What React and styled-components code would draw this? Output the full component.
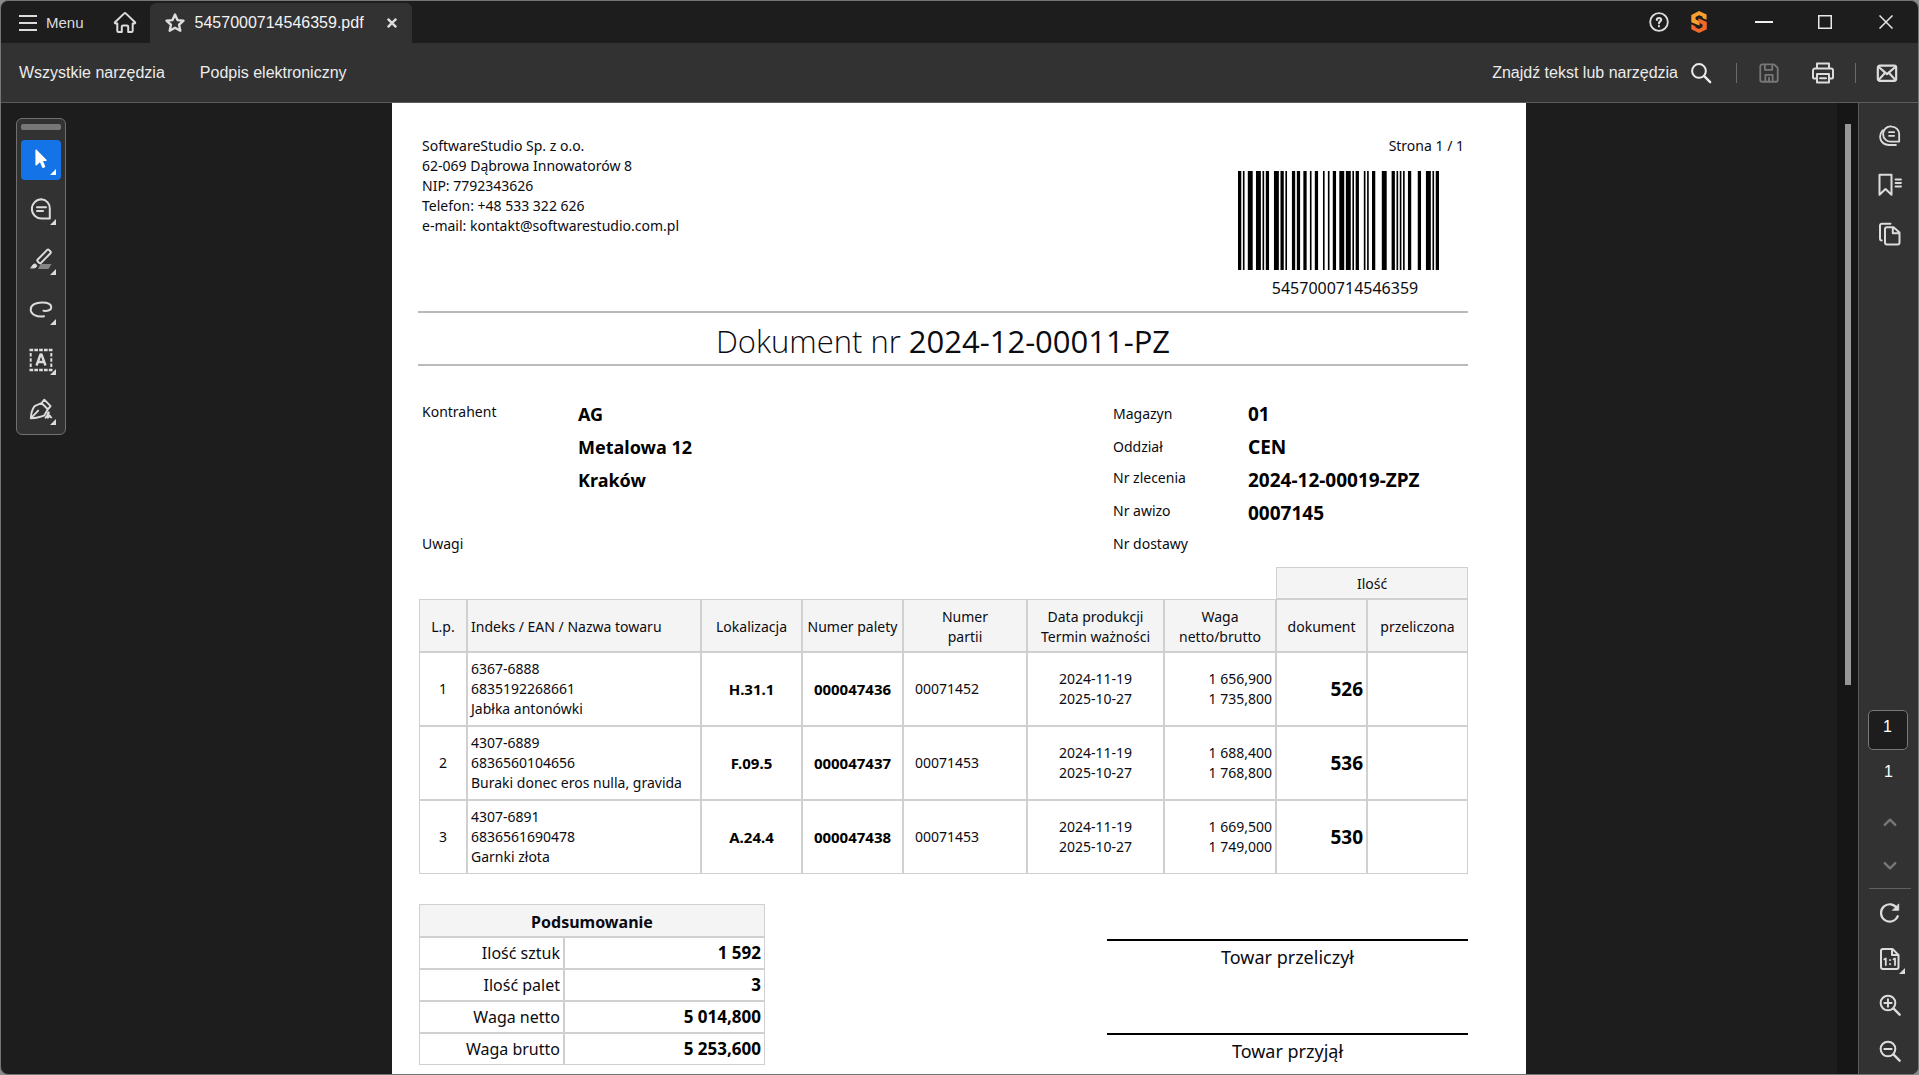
import React from "react";
import styled, { createGlobalStyle, css } from "styled-components";

const chrome = "#1d1d1d";
const panel = "#323232";
const edge = "#5c5c5c";
const ink = "#dcdcdc";
const rule = "#d0d0d0";
const uiFont = '"Liberation Sans", Arial, sans-serif';
const docFont = '"Noto Sans", "Open Sans", sans-serif';
const titleFont = '"Open Sans", "Noto Sans", sans-serif';

const GlobalStyle = createGlobalStyle`
  * { box-sizing: border-box; }
  body { margin: 0; background: #8c8c8c; }
  button, input { font: inherit; color: inherit; }
`;

/* ---------- window chrome ---------- */

const Window = styled.div`
  display: flex;
  flex-direction: column;
  height: 100vh;
  border: 1px solid #757575;
  border-radius: 8px;
  overflow: hidden;
  background: ${chrome};
  color: ${ink};
  font: 16px/20px ${uiFont};
`;

const TitleBar = styled.header`
  display: flex;
  align-items: stretch;
  justify-content: space-between;
  flex: none;
  height: 42px;
`;

const TitleGroup = styled.div`
  display: flex;
  align-items: stretch;
`;

const PlainButton = styled.button`
  display: flex;
  align-items: center;
  justify-content: center;
  padding: 0;
  border: 0;
  background: none;
  flex: none;
  svg { display: block; }
`;

const MenuButton = styled(PlainButton)`
  gap: 9px;
  padding: 2px 0 0 18px;
  font-size: 15px;
`;

const HomeButton = styled(PlainButton)`
  width: 66px;
  padding: 2px 0 0 16px;
`;

const Tab = styled.div`
  display: flex;
  align-items: center;
  width: 262px;
  margin-top: 2px;
  padding-left: 14px;
  border-radius: 6px 6px 0 0;
  background: ${panel};
  color: #f4f4f4;
`;

const TabName = styled.span`
  flex: 1;
  padding-left: 9px;
`;

const TabClose = styled(PlainButton)`
  width: 40px;
  height: 40px;
  color: ${ink};
`;

const TabStar = styled(PlainButton)`
  color: ${ink};
`;

const CaptionButton = styled(PlainButton)`
  width: ${(p) => p.$w}px;
  margin-right: ${(p) => p.$after || 0}px;
`;

const Toolbar = styled.nav`
  display: flex;
  align-items: center;
  justify-content: space-between;
  flex: none;
  height: 60px;
  padding-left: 18px;
  border-bottom: 1px solid ${edge};
  background: ${panel};
  color: #ececec;
`;

const ToolbarLinks = styled.div`
  display: flex;
  gap: 35px;
`;

const TextButton = styled(PlainButton)`
  gap: 12px;
`;

const ToolbarActions = styled.div`
  display: flex;
  align-items: center;
`;

const IconButton = styled(PlainButton)`
  width: ${(p) => p.$w || 40}px;
  height: 40px;
  color: ${(p) => (p.disabled ? "#777" : ink)};
`;

const Separator = styled.span`
  width: 1px;
  height: 20px;
  margin-left: ${(p) => p.$before}px;
  background: #6a6a6a;
`;

/* ---------- work area ---------- */

const Workspace = styled.div`
  display: flex;
  flex: 1;
  min-height: 0;
`;

const ToolRail = styled.aside`
  flex: none;
  width: 80px;
  padding: 15px;
`;

const ToolPalette = styled.div`
  display: flex;
  flex-direction: column;
  align-items: center;
  gap: 10px;
  width: 50px;
  padding: 5px 4px 4px;
  border: 1px solid #707070;
  border-radius: 6px;
  background: ${panel};
`;

const Grip = styled.span`
  width: 40px;
  height: 6px;
  border-radius: 2px;
  background: #777;
`;

const ToolButton = styled(PlainButton)`
  position: relative;
  width: 40px;
  height: 40px;
  border-radius: 4px;
  background: ${(p) => (p.$active ? "#1473e6" : "transparent")};
  color: ${(p) => (p.$active ? "#fff" : ink)};
  ${(p) => p.$more && css`
    &::after {
      content: "";
      position: absolute;
      right: 5px;
      bottom: 5px;
      border-left: 6px solid transparent;
      border-bottom: 6px solid currentColor;
    }
  `}
`;

const Stage = styled.main`
  display: flex;
  flex: 1;
  justify-content: center;
  min-width: 0;
  overflow: hidden;
`;

const ScrollTrack = styled.div`
  flex: none;
  width: 21px;
  padding: 21px 7px 0 8px;
  background: #161616;
`;

const ScrollThumb = styled.div`
  height: 59%;
  background: #989898;
`;

const SidePanel = styled.aside`
  display: flex;
  flex-direction: column;
  justify-content: space-between;
  flex: none;
  width: 60px;
  border-left: 1px solid ${edge};
  background: ${panel};
`;

const SideGroup = styled.div`
  display: flex;
  flex-direction: column;
  align-items: center;
  gap: ${(p) => p.$gap}px;
  padding: ${(p) => p.$pad};
`;

const PageBox = styled.input`
  width: 40px;
  height: 40px;
  padding: 0 0 6px;
  border: 1px solid #777;
  border-radius: 5px;
  background: ${chrome};
  color: #fff;
  font-size: 16px;
  text-align: center;
`;

const PageTotal = styled.span`
  height: 30px;
  margin-bottom: 10px;
  padding-left: 2px;
  color: #fff;
`;

const SideRule = styled.span`
  width: 42px;
  height: 1px;
  margin-top: 2px;
  background: #606060;
`;

/* ---------- printed document ---------- */

const Sheet = styled.article`
  width: 100%;
  max-width: 1134px;
  padding: 30px 58px 0 26px;
  background: #fff;
  color: #0b0b12;
  font: 14px/20px ${docFont};
`;

const SheetHead = styled.div`
  display: flex;
  justify-content: space-between;
  height: 178px;
  padding: 3px 0 0 4px;
`;

const Company = styled.address`
  font-style: normal;
`;

const CodeBlock = styled.div`
  display: flex;
  flex-direction: column;
  width: 246px;
`;

const PageNumber = styled.span`
  padding-right: 4px;
  text-align: right;
`;

const BarcodeBox = styled.div`
  padding: 15px 29px 8px 16px;
  svg { display: block; width: 201px; height: 99px; }
`;

const BarcodeText = styled.span`
  font-size: 16px;
  text-align: center;
`;

const Title = styled.h1`
  margin: 0;
  height: 55px;
  border: solid #bababa;
  border-width: 2px 0;
  font-family: ${titleFont};
  font-size: 31px;
  font-weight: 300;
  line-height: 56px;
  text-align: center;
`;

const TitleNumber = styled.span`
  font-weight: 400;
`;

const Details = styled.div`
  display: flex;
  justify-content: space-between;
  padding: 33px 0 3px 4px;
`;

const Facts = styled.dl`
  display: grid;
  grid-template-columns: ${(p) => p.$label}px auto;
  grid-auto-rows: 33px;
  width: ${(p) => p.$w}px;
  margin: 0;
`;

const Term = styled.dt`
  grid-column: 1;
  line-height: ${(p) => (p.$high ? 25 : 29)}px;
`;

const Value = styled.dd`
  grid-column: 2;
  margin: 0;
  color: #000;
  font-size: ${(p) => p.$size || 18}px;
  font-weight: 700;
  line-height: 30px;
`;

const Table = styled.table`
  width: ${(p) => (p.$w ? `${p.$w}px` : "calc(100% - 1px)")};
  margin-left: 1px;
  border-spacing: 0;
  table-layout: fixed;
`;

const cell = css`
  height: ${(p) => p.$h || "auto"}px;
  padding: 0 3px;
  border: 1px solid ${rule};
  text-align: ${(p) => p.$align || "center"};
`;

const Head = styled.th`
  ${cell}
  padding-top: 2px;
  background: #f4f4f4;
  font-size: ${(p) => p.$size || 14}px;
  font-weight: ${(p) => (p.$bold ? 700 : 400)};
  white-space: nowrap;
`;

const Cell = styled.td`
  ${cell}
  height: 74px;
  padding-left: ${(p) => p.$indent || 3}px;
  white-space: pre-line;
`;

const StrongCell = styled(Cell)`
  color: #000;
  font-weight: 700;
  font-size: ${(p) => p.$size || 15}px;
`;

const Closing = styled.div`
  display: flex;
  justify-content: space-between;
  align-items: flex-start;
  padding-top: 30px;
`;

const SumLabel = styled.th`
  ${cell}
  height: 32px;
  font-size: 16px;
  font-weight: 400;
`;

const SumValue = styled.td`
  ${cell}
  height: 32px;
  color: #000;
  font-size: 17px;
  font-weight: 700;
`;

const Signatures = styled.div`
  display: grid;
  gap: 62px;
  width: 361px;
  padding-top: 35px;
`;

const Signature = styled.div`
  height: 32px;
  border-top: 2px solid #000;
  font-size: 18px;
  line-height: 32px;
  text-align: center;
`;

/* ---------- drawings ---------- */

const Icon = ({ s = 24, sw = 2, children, ...rest }) => (
  <svg width={s} height={s} viewBox="0 0 24 24" fill="none" stroke="currentColor" strokeWidth={sw} strokeLinecap="round" strokeLinejoin="round" aria-hidden="true" {...rest}>
    {children}
  </svg>
);

const icons = {
  menu: <svg width="18" height="18" viewBox="0 0 18 18" stroke="currentColor" strokeWidth="2" aria-hidden="true"><path d="M0 2h18M0 9h18M0 16h18" /></svg>,
  home: <Icon><path d="M11 2.6 2 11.2c-.5.5-.3 1.3.5 1.3h1.8v7.3c0 .7.5 1.2 1.2 1.2h3.3v-5.3c0-.8.5-1.3 1.3-1.3h3.8c.8 0 1.3.5 1.3 1.3V21h3.3c.7 0 1.2-.5 1.2-1.2v-7.3h1.8c.8 0 1-.8.5-1.3L13 2.6c-.6-.6-1.4-.6-2 0z" /></Icon>,
  star: <Icon s={22} sw={2.6}><path d="m12 2.8 2.7 6 6.6.7-4.9 4.4 1.4 6.5L12 17.1l-5.8 3.3 1.4-6.5-4.9-4.4 6.6-.7z" /></Icon>,
  tabX: <svg width="10" height="10" viewBox="0 0 10 10" stroke="currentColor" strokeWidth="2.4" aria-hidden="true"><path d="m.8.8 8.4 8.4M9.2.8.8 9.2" /></svg>,
  help: <Icon s={20} sw={2.2}><circle cx="12" cy="12" r="10.6" /><path d="M9.4 9.4c.2-3 5.2-3 5.2 0 0 1.9-2.6 2-2.6 4.2M12 17v.2" strokeWidth="2.6" /></Icon>,
  logo: (
    <svg width="16" height="22" viewBox="0 0 16 22" aria-hidden="true">
      <path d="M8 0 15.600 3.600v5.200L11.500 7V5.600L8 4.200 4.600 5.900v2.500l3.900 1.900v4.200L.3 11.300V3.900z" fill="#f9a12e" />
      <path d="M8 22 .3 18.200v-5l4.100 2v1.400L8 18l3.500-1.900v-2.500L7.400 11.500V7.300l8.400 3.800v7.200z" fill="#f2682a" />
    </svg>
  ),
  min: <svg width="18" height="2" aria-hidden="true"><path d="M0 1h18" stroke="#f0f0f0" strokeWidth="2" /></svg>,
  max: <svg width="14" height="14" aria-hidden="true"><rect x=".75" y=".75" width="12.500" height="12.500" fill="none" stroke="#e8e8e8" strokeWidth="1.500" /></svg>,
  close: <svg width="14" height="14" aria-hidden="true"><path d="m.5.5 13 13M13.500.5l-13 13" stroke="#e8e8e8" strokeWidth="1.500" /></svg>,
  search: <Icon s={22} sw={2.2}><circle cx="9.800" cy="9.800" r="7.500" /><path d="m15.500 15.500 6.500 6.500" strokeWidth="2.600" /></Icon>,
  save: <Icon s={22}><path d="M4.500 2.500h13l4 4v13a2 2 0 0 1-2 2h-15a2 2 0 0 1-2-2v-15a2 2 0 0 1 2-2zM7.500 3v5.500h8V3M8 21v-7h8v7M12 17v4" /></Icon>,
  print: <Icon><path d="M6 6.500v-4h12v4M5.500 17.500H3a1 1 0 0 1-1-1V9.500a2 2 0 0 1 2-2h16a2 2 0 0 1 2 2v7a1 1 0 0 1-1 1h-2.500" /><path d="M6 13h12v8.500H6zM9 17.200h6" /></Icon>,
  mail: <Icon s={22} sw={2.400}><rect x="2" y="4" width="20" height="16.500" rx="2.200" /><path d="m3 5.500 9 7.800 9-7.800M3 19.500l6.200-7M21 19.500l-6.200-7" /></Icon>,
  cursor: <svg width="14" height="22" viewBox="0 0 14 22" fill="currentColor" aria-hidden="true"><path d="M1.400 1.200c0-.7.700-1 1.200-.5l9.900 10c.5.500.2 1.200-.5 1.200H9l2.200 5.300c.2.500 0 .9-.4 1.100l-1.500.6c-.5.200-.9 0-1.100-.4L6 13.200l-3.300 3.100c-.5.500-1.300.2-1.300-.5z" /></svg>,
  comment: <Icon sw={2}><path d="M12.500 1.300a9.300 9.300 0 1 0 0 19.200h8.300v-9.600a9 9 0 0 0-8.300-9.600z" /><path d="M8 9.200h9M8 13h6" /></Icon>,
  marker: <Icon><path d="m8.500 11.800 9.700-9.900c.5-.5 1.200-.5 1.700 0l1.600 1.600c.5.500.5 1.200 0 1.700l-9.700 9.900c-1 1-4.300-2.300-3.300-3.300z" /><path d="M2 19.800c1.300-.5 1.200-3.800 3.700-3.800 2.600 0 3 3.800-.4 3.900z" fill="currentColor" strokeWidth="1" /><path d="M11.500 16H22.500l-3 5H9z" fill="#858585" stroke="none" /></Icon>,
  lasso: <Icon><path d="M15 18.300C7.500 19.300 1.700 16.300 1.700 11.600 1.700 6.800 7 4.400 13 4.400c5.600 0 9.300 1.800 9.300 4.800 0 2.800-3.600 4.200-7.800 3.600" /></Icon>,
  textBox: (
    <Icon strokeLinecap="butt">
      <path d="M.5 2h23M.5 22h23" strokeWidth="2.600" strokeDasharray="3.700 1.120" />
      <path d="M1.700 5v14M22.300 5v14" strokeWidth="2" strokeDasharray="3.500 1.700" />
      <path d="m7.500 17.500 4-11h1l4 11M9 14h6" strokeWidth="2.400" />
    </Icon>
  ),
  pen: <Icon sw={1.900}><path d="M1.800 20.300c.3-5.500 1.600-9.300 3.800-12.100L12.500 5l6.300 6.200-3.300 6.100c-3 1.400-7 2.500-13.700 3zM2.200 19.800l7-7.200M13 4.500l2.300-2.800 6.300 6.400-2.300 2.700" /><path d="M16.500 19.700c2.300-2.200 3.700-5.200 3.300-5.400-1-.5-2 5.500-1 5.500s1-2.500 1.800-2.300c.7.200.2 2 1.700 1.900" /></Icon>,
  comments: <Icon s={22} sw={2}><path d="M14 1.700a8.300 8.300 0 1 0 0 16.400h8V9.900a8.200 8.200 0 0 0-8-8.200z" /><path d="M11 7.800h5.500M11 11.800h5.500" /><path d="M4 5.800c-4.700 5.500-3.700 15.500 7 16h7.500" /></Icon>,
  bookmark: <Icon s={24}><path d="M1.500 1.800h12v20L7.500 16l-6 5.800z" /><path d="M17.500 6.500h5.500M17.500 10h5.500M17.500 13.500h5.500" strokeWidth="1.800" /></Icon>,
  pages: <Icon s={24}><path d="M9 5.200h6.500l6 5.300v10a2 2 0 0 1-2 2H9a2 2 0 0 1-2-2V7.200a2 2 0 0 1 2-2zM14.800 5.700v5.500h6" /><path d="M12.500 1.800H3.800A1.800 1.800 0 0 0 2 3.600v13c0 1 .7 2 1.700 2" /></Icon>,
  up: <Icon s={14} sw={4}><path d="m3 17 9-9 9 9" /></Icon>,
  down: <Icon s={14} sw={4}><path d="m3 7 9 9 9-9" /></Icon>,
  rotate: <Icon s={22} sw={2.400}><path d="M20.500 15.500A9.500 9.500 0 1 1 19.800 7" /><path d="M21.500 2.500V9H15z" fill="currentColor" strokeWidth="1" /></Icon>,
  actual: (
    <Icon s={24}>
      <path d="M5 2h9.500L20.500 8v12a2 2 0 0 1-2 2H5a2 2 0 0 1-2-2V4a2 2 0 0 1 2-2zM14 2.500V8h6" />
      <path d="m6.300 12.300 1.500-.8V18M15.500 12.300l1.500-.8V18M12 13v.2M12 17v.2" strokeWidth="1.800" />
    </Icon>
  ),
  zoomIn: <Icon s={22} sw={2.200}><circle cx="9.800" cy="9.800" r="8" /><path d="M9.800 5.800v8M5.800 9.800h8" /><path d="m16 16 6.500 6.500" strokeWidth="2.600" /></Icon>,
  zoomOut: <Icon s={22} sw={2.200}><circle cx="9.800" cy="9.800" r="8" /><path d="M5.800 9.800h8" /><path d="m16 16 6.500 6.500" strokeWidth="2.600" /></Icon>,
};

/* Code 128 C: bar and gap widths in modules, starting with a bar */
const codeWidths = [
  "211232", "311123", "312113", "212222", "122312", "122231",
  "311123", "111224", "332111", "111224", "2331112",
].join("");

const Barcode = () => {
  let x = 0;
  const bars = [];
  [...codeWidths].forEach((w, i) => {
    if (i % 2 === 0) bars.push(<rect key={i} x={x} y="0" width={w} height="99" />);
    x += Number(w);
  });
  return (
    <svg viewBox="0 0 123 99" preserveAspectRatio="none" role="img" aria-label="Kod kreskowy">
      {bars}
    </svg>
  );
};

/* ---------- data ---------- */

const tools = [
  ["cursor", "Zaznacz"],
  ["comment", "Komentarz"],
  ["marker", "Wyróżnienie"],
  ["lasso", "Rysuj"],
  ["textBox", "Tekst"],
  ["pen", "Podpis"],
];

const company = [
  "SoftwareStudio Sp. z o.o.",
  "62-069 Dąbrowa Innowatorów 8",
  "NIP: 7792343626",
  "Telefon: +48 533 322 626",
  "e-mail: kontakt@softwarestudio.com.pl",
];

const facts = [
  ["Magazyn", "01"],
  ["Oddział", "CEN"],
  ["Nr zlecenia", "2024-12-00019-ZPZ", true],
  ["Nr awizo", "0007145", true],
  ["Nr dostawy", "", true],
];

const columns = [48, 234, 101, 101, 124, 137, 112, 91, 101];

const items = [
  { name: "6367-6888\n6835192268661\nJabłka antonówki", place: "H.31.1", pallet: "000047436", lot: "00071452", weight: "1 656,900\n1 735,800", qty: 526 },
  { name: "4307-6889\n6836560104656\nBuraki donec eros nulla, gravida", place: "F.09.5", pallet: "000047437", lot: "00071453", weight: "1 688,400\n1 768,800", qty: 536 },
  { name: "4307-6891\n6836561690478\nGarnki złota", place: "A.24.4", pallet: "000047438", lot: "00071453", weight: "1 669,500\n1 749,000", qty: 530 },
];

const totals = [
  ["Ilość sztuk", "1 592"],
  ["Ilość palet", "3"],
  ["Waga netto", "5 014,800"],
  ["Waga brutto", "5 253,600"],
];

/* ---------- parts ---------- */

const Document = () => (
  <Sheet>
    <SheetHead>
      <Company>
        {company.map((line) => <div key={line}>{line}</div>)}
      </Company>
      <CodeBlock>
        <PageNumber>Strona 1 / 1</PageNumber>
        <BarcodeBox><Barcode /></BarcodeBox>
        <BarcodeText>5457000714546359</BarcodeText>
      </CodeBlock>
    </SheetHead>
    <Title>Dokument nr <TitleNumber>2024-12-00011-PZ</TitleNumber></Title>
    <Details>
      <Facts $label={156} $w={500}>
        <Term $high>Kontrahent</Term>
        <Value>AG</Value>
        <Value>Metalowa 12</Value>
        <Value>Kraków</Value>
        <Value />
        <Term $high>Uwagi</Term>
      </Facts>
      <Facts $label={135} $w={355}>
        {facts.map(([label, value, high]) => (
          <React.Fragment key={label}>
            <Term $high={high}>{label}</Term>
            <Value $size={19}>{value}</Value>
          </React.Fragment>
        ))}
      </Facts>
    </Details>
    <Table>
      <colgroup>
        {columns.map((w, i) => <col key={i} width={w} />)}
      </colgroup>
      <thead>
        <tr>
          <td colSpan={7} />
          <Head colSpan={2} $h={32}>Ilość</Head>
        </tr>
        <tr>
          <Head $h={53}>L.p.</Head>
          <Head $align="left">Indeks / EAN / Nazwa towaru</Head>
          <Head>Lokalizacja</Head>
          <Head>Numer palety</Head>
          <Head>Numer<br />partii</Head>
          <Head>Data produkcji<br />Termin ważności</Head>
          <Head>Waga<br />netto/brutto</Head>
          <Head>dokument</Head>
          <Head>przeliczona</Head>
        </tr>
      </thead>
      <tbody>
        {items.map((item, i) => (
          <tr key={item.pallet}>
            <Cell>{i + 1}</Cell>
            <Cell $align="left">{item.name}</Cell>
            <StrongCell>{item.place}</StrongCell>
            <StrongCell>{item.pallet}</StrongCell>
            <Cell $align="left" $indent={11}>{item.lot}</Cell>
            <Cell>{"2024-11-19\n2025-10-27"}</Cell>
            <Cell $align="right">{item.weight}</Cell>
            <StrongCell $align="right" $size={19}>{item.qty}</StrongCell>
            <Cell />
          </tr>
        ))}
      </tbody>
    </Table>
    <Closing>
      <Table $w={346}>
        <colgroup>
          <col width={145} />
          <col width={201} />
        </colgroup>
        <thead>
          <tr><Head colSpan={2} $h={33} $size={16} $bold>Podsumowanie</Head></tr>
        </thead>
        <tbody>
          {totals.map(([label, value]) => (
            <tr key={label}>
              <SumLabel scope="row" $align="right">{label}</SumLabel>
              <SumValue $align="right">{value}</SumValue>
            </tr>
          ))}
        </tbody>
      </Table>
      <Signatures>
        <Signature>Towar przeliczył</Signature>
        <Signature>Towar przyjął</Signature>
      </Signatures>
    </Closing>
  </Sheet>
);

export default function App() {
  return (
    <>
      <GlobalStyle />
      <Window>
        <TitleBar>
          <TitleGroup>
            <MenuButton>{icons.menu}Menu</MenuButton>
            <HomeButton aria-label="Strona główna">{icons.home}</HomeButton>
            <Tab>
              <TabStar aria-label="Dodaj do ulubionych">{icons.star}</TabStar>
              <TabName>5457000714546359.pdf</TabName>
              <TabClose aria-label="Zamknij kartę">{icons.tabX}</TabClose>
            </Tab>
          </TitleGroup>
          <TitleGroup>
            <CaptionButton $w={40} aria-label="Pomoc">{icons.help}</CaptionButton>
            <CaptionButton $w={40} $after={13} aria-label="Konto">{icons.logo}</CaptionButton>
            <CaptionButton $w={64} aria-label="Minimalizuj">{icons.min}</CaptionButton>
            <CaptionButton $w={58} aria-label="Maksymalizuj">{icons.max}</CaptionButton>
            <CaptionButton $w={64} aria-label="Zamknij">{icons.close}</CaptionButton>
          </TitleGroup>
        </TitleBar>
        <Toolbar>
          <ToolbarLinks>
            <TextButton>Wszystkie narzędzia</TextButton>
            <TextButton>Podpis elektroniczny</TextButton>
          </ToolbarLinks>
          <ToolbarActions>
            <TextButton>Znajdź tekst lub narzędzia{icons.search}</TextButton>
            <Separator $before={24} />
            <IconButton $w={64} disabled aria-label="Zapisz">{icons.save}</IconButton>
            <IconButton $w={44} aria-label="Drukuj">{icons.print}</IconButton>
            <Separator $before={10} />
            <IconButton $w={62} aria-label="Wyślij">{icons.mail}</IconButton>
          </ToolbarActions>
        </Toolbar>
        <Workspace>
          <ToolRail>
            <ToolPalette>
              <Grip />
              {tools.map(([icon, label], i) => (
                <ToolButton key={icon} $active={i === 0} $more aria-label={label}>{icons[icon]}</ToolButton>
              ))}
            </ToolPalette>
          </ToolRail>
          <Stage><Document /></Stage>
          <ScrollTrack><ScrollThumb /></ScrollTrack>
          <SidePanel>
            <SideGroup $gap={9} $pad="13px 0 0 2px">
              <IconButton aria-label="Komentarze">{icons.comments}</IconButton>
              <IconButton aria-label="Zakładki">{icons.bookmark}</IconButton>
              <IconButton aria-label="Strony">{icons.pages}</IconButton>
            </SideGroup>
            <SideGroup $gap={0} $pad="0 0 3px 2px">
              <SideGroup $gap={12} $pad="0 4px 0 0">
                <PageBox aria-label="Numer strony" defaultValue="1" />
                <PageTotal>1</PageTotal>
              </SideGroup>
              <SideGroup $gap={4}>
                <IconButton disabled aria-label="Poprzednia strona">{icons.up}</IconButton>
                <IconButton disabled aria-label="Następna strona">{icons.down}</IconButton>
              </SideGroup>
              <SideRule />
              <SideGroup $gap={6} $pad="4px 0 0">
                <ToolButton aria-label="Obróć">{icons.rotate}</ToolButton>
                <ToolButton $more aria-label="Rozmiar rzeczywisty">{icons.actual}</ToolButton>
                <ToolButton aria-label="Powiększ">{icons.zoomIn}</ToolButton>
                <ToolButton aria-label="Pomniejsz">{icons.zoomOut}</ToolButton>
              </SideGroup>
            </SideGroup>
          </SidePanel>
        </Workspace>
      </Window>
    </>
  );
}
